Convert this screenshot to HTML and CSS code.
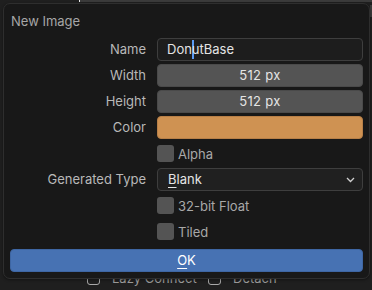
FILE: index.html
```html
<!DOCTYPE html>
<html>
<head>
<meta charset="utf-8">
<link rel="stylesheet" href="styles.css">
</head>
<body>
<div class="screen">
  <div class="under">
    <div class="under-top"><span class="under-caret"></span></div>
    <div class="under-mid"><span class="under-scroll"></span></div>
    <div class="under-row">
      <div class="ucheck"><span class="ubox"></span><span class="utext">Lazy Connect</span></div>
      <div class="ucheck"><span class="ubox"></span><span class="utext">Detach</span></div>
    </div>
  </div>

  <div class="dialog">
    <div class="title">New Image</div>
    <div class="form">
      <div class="label">Name</div>
      <div class="field text-field">Don<span class="caret"></span>utBase</div>

      <div class="label">Width</div>
      <div class="field num-field">512 px</div>

      <div class="label">Height</div>
      <div class="field num-field">512 px</div>

      <div class="label">Color</div>
      <div class="field color-field"></div>

      <div class="label"></div>
      <div class="check"><span class="box"></span><span class="check-text">Alpha</span></div>

      <div class="label">Generated Type</div>
      <div class="field select-field"><span><span class="ul">B</span>lank</span>
        <svg class="chev" width="9" height="6" viewBox="0 0 9 6"><path d="M1 1 L4.5 4.5 L8 1" fill="none" stroke="#d0d0d0" stroke-width="1.3"/></svg>
      </div>

      <div class="label"></div>
      <div class="check"><span class="box"></span><span class="check-text">32-bit Float</span></div>

      <div class="label"></div>
      <div class="check"><span class="box"></span><span class="check-text">Tiled</span></div>
    </div>
    <div class="ok"><span><span class="ul">O</span>K</span></div>
  </div>
</div>
</body>
</html>
```

FILE: styles.css
```css
html, body {
  margin: 0;
  padding: 0;
}
body {
  background: #1f1f1f;
  font-family: Inter, "Noto Sans", sans-serif;
  font-size: 13px;
  overflow: hidden;
}
.screen {
  position: relative;
  width: 372px;
  height: 290px;
  overflow: hidden;
}

/* content behind the popup */
.under {
  height: 290px;
  display: flex;
  flex-direction: column;
}
.under-top {
  height: 2px;
  margin-left: 79px;
  background: #3a3a3a;
  display: flex;
}
.under-caret {
  width: 1px;
  height: 2px;
  background: #e8e8e8;
}
.under-mid {
  flex: 1;
  display: flex;
  justify-content: flex-end;
  align-items: flex-start;
}
.under-scroll {
  width: 2px;
  height: 12px;
  margin-top: 3px;
  background: #3a3a3a;
}
.under-row {
  height: 18px;
  display: flex;
  gap: 8px;
  padding-left: 87px;
  padding-bottom: 3px;
  align-items: center;
  color: #9a9a9a;
}
.ucheck {
  display: flex;
  align-items: center;
  gap: 12px;
  width: 113px;
}
.ubox {
  width: 11px;
  height: 11px;
  border: 1px solid #a8a8a8;
  border-radius: 3px;
}

/* popup */
.dialog {
  position: absolute;
  left: 3px;
  top: 3px;
  width: 367px;
  height: 276px;
  box-sizing: border-box;
  background: #181818;
  border: 1px solid #2e2e2e;
  border-radius: 7px;
  padding: 0 6px;
  box-shadow: 0 1px 3px rgba(0,0,0,0.4);
}
.title {
  height: 16px;
  line-height: 16px;
  padding: 9px 0 9px 1px;
  color: #a6a6a6;
}
.form {
  display: grid;
  grid-template-columns: 136px 206px;
  column-gap: 11px;
  grid-auto-rows: 23px;
  row-gap: 3px;
}
.label {
  text-align: right;
  line-height: 23px;
  color: #b8b8b8;
  white-space: nowrap;
}
.field {
  box-sizing: border-box;
  border-radius: 4px;
  line-height: 21px;
  color: #e4e4e4;
}
.text-field {
  background: #1d1d1d;
  border: 1px solid #3e3e3e;
  padding-left: 9px;
}
.caret {
  display: inline-block;
  width: 2px;
  height: 19px;
  margin-right: -2px;
  vertical-align: -5px;
  background: #5b9cf5;
}
.num-field {
  background: #545454;
  border: 1px solid #4a4a4a;
  text-align: center;
  letter-spacing: 0.3px;
}
.color-field {
  background: #cf9252;
  border: 1px solid #b88048;
}
.select-field {
  background: #202020;
  border: 1px solid #3e3e3e;
  padding: 0 7px 0 10px;
  display: flex;
  justify-content: space-between;
  align-items: center;
}
.chev {
  display: block;
}
.ul {
  text-decoration: underline;
  text-underline-offset: 3px;
  text-decoration-thickness: 1px;
}
.check {
  display: flex;
  align-items: center;
  gap: 4px;
  color: #a8a8a8;
}
.box {
  width: 17px;
  height: 17px;
  border-radius: 3px;
  background: #545454;
}
.ok {
  margin-top: 6px;
  height: 23px;
  box-sizing: border-box;
  background: #4772b3;
  border: 1px solid #3e66a3;
  border-radius: 4px;
  color: #ffffff;
  text-align: center;
  line-height: 21px;
}
```
